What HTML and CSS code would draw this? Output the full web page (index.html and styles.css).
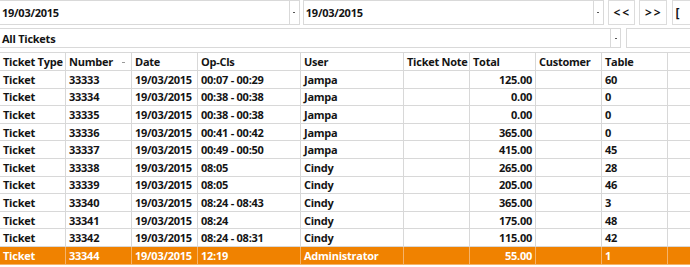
FILE: index.html
```html
<!DOCTYPE html>
<html>
<head>
<meta charset="utf-8">
<link rel="stylesheet" href="styles.css">
</head>
<body>
<div class="page">
  <div class="bar bar-top">
    <div class="combo combo-date1"><span class="combo-text">19/03/2015</span><span class="combo-btn"><i class="arrow"></i></span></div>
    <div class="combo combo-date2"><span class="combo-text">19/03/2015</span><span class="combo-btn"><i class="arrow"></i></span></div>
    <div class="btn">&lt;&lt;</div>
    <div class="btn">&gt;&gt;</div>
    <div class="btn btn-cut">[</div>
  </div>
  <div class="bar bar-filter">
    <div class="combo combo-filter"><span class="combo-text">All Tickets</span><span class="combo-btn"><i class="arrow"></i></span></div>
    <div class="search"></div>
  </div>
  <table class="grid">
    <colgroup>
      <col class="c65"><col class="c66"><col class="c66"><col class="c103"><col class="c103"><col class="c66"><col class="c66"><col class="c66"><col class="c66"><col class="crest">
    </colgroup>
    <thead>
      <tr>
        <th>Ticket Type</th><th class="sorted">Number<i class="sort"></i></th><th>Date</th><th>Op-Cls</th><th>User</th><th>Ticket Note</th><th>Total</th><th>Customer</th><th>Table</th><th></th>
      </tr>
    </thead>
    <tbody>
      <tr><td>Ticket</td><td>33333</td><td>19/03/2015</td><td>00:07 - 00:29</td><td>Jampa</td><td></td><td class="num">125.00</td><td></td><td>60</td><td></td></tr>
      <tr><td>Ticket</td><td>33334</td><td>19/03/2015</td><td>00:38 - 00:38</td><td>Jampa</td><td></td><td class="num">0.00</td><td></td><td>0</td><td></td></tr>
      <tr><td>Ticket</td><td>33335</td><td>19/03/2015</td><td>00:38 - 00:38</td><td>Jampa</td><td></td><td class="num">0.00</td><td></td><td>0</td><td></td></tr>
      <tr><td>Ticket</td><td>33336</td><td>19/03/2015</td><td>00:41 - 00:42</td><td>Jampa</td><td></td><td class="num">365.00</td><td></td><td>0</td><td></td></tr>
      <tr><td>Ticket</td><td>33337</td><td>19/03/2015</td><td>00:49 - 00:50</td><td>Jampa</td><td></td><td class="num">415.00</td><td></td><td>45</td><td></td></tr>
      <tr><td>Ticket</td><td>33338</td><td>19/03/2015</td><td>08:05</td><td>Cindy</td><td></td><td class="num">265.00</td><td></td><td>28</td><td></td></tr>
      <tr><td>Ticket</td><td>33339</td><td>19/03/2015</td><td>08:05</td><td>Cindy</td><td></td><td class="num">205.00</td><td></td><td>46</td><td></td></tr>
      <tr><td>Ticket</td><td>33340</td><td>19/03/2015</td><td>08:24 - 08:43</td><td>Cindy</td><td></td><td class="num">365.00</td><td></td><td>3</td><td></td></tr>
      <tr><td>Ticket</td><td>33341</td><td>19/03/2015</td><td>08:24</td><td>Cindy</td><td></td><td class="num">175.00</td><td></td><td>48</td><td></td></tr>
      <tr><td>Ticket</td><td>33342</td><td>19/03/2015</td><td>08:24 - 08:31</td><td>Cindy</td><td></td><td class="num">115.00</td><td></td><td>42</td><td></td></tr>
      <tr class="selected"><td>Ticket</td><td>33344</td><td>19/03/2015</td><td>12:19</td><td>Administrator</td><td></td><td class="num">55.00</td><td></td><td>1</td><td></td></tr>
    </tbody>
  </table>
</div>
</body>
</html>
```

FILE: styles.css
```css
html, body {
  margin: 0;
  padding: 0;
  background: #ffffff;
  overflow: hidden;
}
body {
  font-family: "Open Sans", "Noto Sans", "Liberation Sans", sans-serif;
  font-weight: 700;
  font-size: 11px;
  letter-spacing: -0.25px;
  color: #141414;
}
.page {
  width: 700px;
  margin-left: -1px;
}
.bar {
  display: flex;
  align-items: stretch;
}
.bar-top {
  height: 25px;
  gap: 4px;
}
.bar-filter {
  height: 20px;
  margin-top: 3px;
  gap: 5px;
}
.combo {
  display: flex;
  box-sizing: border-box;
  border: 1px solid #d9d9d9;
  background: #fff;
}
.combo-text {
  flex: 1;
  display: flex;
  align-items: center;
  padding-left: 2px;
}
.combo-btn {
  width: 9px;
  border-left: 1px solid #d9d9d9;
  display: flex;
  align-items: center;
  justify-content: center;
}
.arrow {
  display: block;
  width: 2px;
  height: 1px;
  background: #555;
}
.combo-date1 { width: 308px; }
.combo-date2 { width: 308px; margin-left: -1px; }
.combo-filter { width: 622px; }
.btn {
  width: 28px;
  box-sizing: border-box;
  border: 1px solid #dcdcdc;
  display: flex;
  align-items: center;
  justify-content: center;
  font-size: 12px;
  letter-spacing: 2px;
  padding-left: 2px;
  background: #fff;
}
.btn-cut {
  justify-content: flex-start;
  padding-left: 3px;
  margin-left: 1px;
}
.search {
  flex: 1;
  box-sizing: border-box;
  border: 1px solid #d9d9d9;
}
.grid {
  margin-top: 4px;
  border-collapse: collapse;
  table-layout: fixed;
  width: 701px;
}
.c65 { width: 66px; }
.c66 { width: 66px; }
.c103 { width: 103px; }
.crest { width: 40px; }
.grid th, .grid td {
  border: 1px solid #d8d8d8;
  padding: 0 0 0 3px;
  text-align: left;
  white-space: nowrap;
  overflow: hidden;
  line-height: 15px;
  font-weight: 700;
}
.grid thead tr {
  height: 18px;
}
.grid tbody tr {
  height: 17.6px;
}
.grid td.num {
  text-align: right;
  padding-right: 3px;
}
.sorted {
  position: relative;
}
.sort {
  position: absolute;
  right: 6px;
  top: 9px;
  width: 3px;
  height: 1px;
  background: #9a9a9a;
}
.grid tr.selected td {
  background: #f08200;
  color: #ffffff;
  border-color: #f5b36a;
}
```
